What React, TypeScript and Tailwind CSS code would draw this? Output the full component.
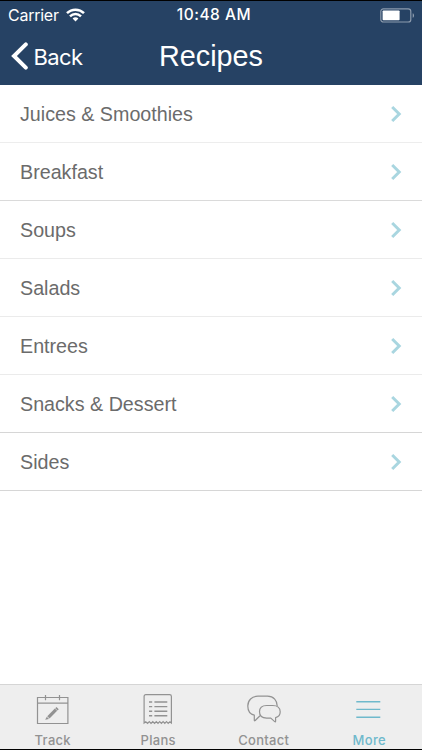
import type { ReactNode } from "react";

type Category = {
    name: string;
    divider: string;
};

const categories: Category[] = [
    { name: "Juices & Smoothies", divider: "border-[#ededed]" },
    { name: "Breakfast", divider: "border-[#dadada]" },
    { name: "Soups", divider: "border-[#ebebeb]" },
    { name: "Salads", divider: "border-[#ebebeb]" },
    { name: "Entrees", divider: "border-[#ebebeb]" },
    { name: "Snacks & Dessert", divider: "border-[#d6d6d6]" },
    { name: "Sides", divider: "border-[#d6d6d6]" },
];

export default function App() {
    return (
        <div className="flex h-[750px] w-[422px] flex-col overflow-hidden border-y border-black bg-white font-['Liberation_Sans',Arial,sans-serif]">
            <header className="h-21 shrink-0 bg-[#264264] text-white">
                <StatusBar />
                <NavBar />
            </header>

            <main className="flex-1">
                <ul>
                    {categories.map((category) => (
                        <CategoryRow key={category.name} category={category} />
                    ))}
                </ul>
            </main>

            <TabBar />
        </div>
    );
}

function StatusBar() {
    return (
        <div className="grid h-7 grid-cols-3 items-center pr-[7px] pl-2 font-[Inter,sans-serif]">
            <div className="flex items-center gap-[7px]">
                <span className="text-[16px] leading-5 tracking-[-0.25px]">Carrier</span>
                <svg width="19" height="14" viewBox="0 0 19 14" fill="none" stroke="currentColor" strokeWidth="2.5">
                    <path d="M1 5.1C5.7.5 13.3.5 18 5.1" />
                    <path d="M4 8.3C7.1 5.3 11.9 5.3 15 8.3" />
                    <path d="M6.6 10.5C8.2 8.9 10.8 8.9 12.4 10.5L9.5 13.4Z" fill="currentColor" stroke="none" />
                </svg>
            </div>

            <span className="pl-[5px] text-center text-[15.5px] leading-5 font-medium tracking-[0.5px] whitespace-nowrap">
                10:48 AM
            </span>

            <svg className="justify-self-end" width="35" height="15" viewBox="0 0 35 15" fill="none">
                <rect x=".8" y=".8" width="30" height="13.2" rx="2.6" stroke="#8c9bad" strokeWidth="1.2" />
                <rect x="2.6" y="2.5" width="17" height="9.8" rx=".8" fill="white" />
                <path d="M32.7 5.2C34.5 5.8 34.5 9.2 32.7 9.8Z" fill="#8c9bad" />
            </svg>
        </div>
    );
}

function NavBar() {
    return (
        <div className="grid h-14 grid-cols-[1fr_auto_1fr] items-center pb-0.5">
            <button type="button" className="flex items-center gap-[5.5px] pl-[11px]">
                <svg width="17" height="28" viewBox="0 0 17 28" fill="none" stroke="white" strokeWidth="4" strokeLinecap="round">
                    <path d="M14.8 2.4 3 14 14.8 25.6" />
                </svg>
                <span className="pt-0.5 font-[Inter,sans-serif] text-[22px] leading-7 tracking-[-0.6px]">Back</span>
            </button>

            <h1 className="text-[28.8px] leading-8">Recipes</h1>
        </div>
    );
}

function CategoryRow({ category }: { category: Category }) {
    return (
        <li className={`flex h-[58px] items-center justify-between border-b pr-5 pl-5 ${category.divider}`}>
            <span className="text-[19.7px] leading-6 text-[#6b6b6b]">{category.name}</span>
            <svg width="12" height="18" viewBox="0 0 12 18" fill="none" stroke="#a9d6e0" strokeWidth="3">
                <path d="M2.2 2 9.2 9 2.2 16" />
            </svg>
        </li>
    );
}

function TabBar() {
    return (
        <nav className="grid h-[65px] shrink-0 grid-cols-4 border-t border-[#d5d5d5] bg-[#eeeeee] text-[#929292]">
            <Tab label="Track">
                <CalendarIcon />
            </Tab>
            <Tab label="Plans">
                <ReceiptIcon />
            </Tab>
            <Tab label="Contact">
                <ChatIcon />
            </Tab>
            <Tab label="More" active>
                <MenuIcon />
            </Tab>
        </nav>
    );
}

type TabProps = {
    label: string;
    active?: boolean;
    children: ReactNode;
};

function Tab({ label, active = false, children }: TabProps) {
    return (
        <button type="button" className={`flex flex-col items-center pt-2 ${active ? "text-[#6fb9cc]" : ""}`}>
            {children}
            <span className="mt-[5px] font-[Inter,sans-serif] text-[13px] leading-4 font-medium tracking-[0.3px]">
                {label}
            </span>
        </button>
    );
}

function CalendarIcon() {
    return (
        <svg width="34" height="34" viewBox="0 0 34 34" fill="none" stroke="currentColor" strokeWidth="1.2">
            <path d="M1.5 4.5H31.9V30.5H1.5ZM1.5 10.2H31.9M9.5 2V7.3M23.5 2V7.3" />
            <path d="M12.4 24.3 20 16.7" strokeWidth="3.2" />
            <path d="M20.4 16.3 21.6 15.1" strokeWidth="3.2" />
            <path d="M10.8 23.7 13 25.9 9.2 26.8Z" fill="currentColor" stroke="none" />
        </svg>
    );
}

function ReceiptIcon() {
    return (
        <svg width="34" height="34" viewBox="0 0 34 34" fill="none" stroke="currentColor" strokeWidth="1.2">
            <path d="M3.1 30V3.5Q3.1 1.7 4.9 1.7H28.6Q30.4 1.7 30.4 3.5V30L28.9 28.7 27.2 30.4 25.5 28.7 23.8 30.4 22.1 28.7 20.4 30.4 18.7 28.7 17 30.4 15.3 28.7 13.5 30.4 11.8 28.7 10 30.4 8.3 28.7 6.6 30.4 4.8 28.7Z" />
            <path d="M8 9H11.2M8 13.6H11.2M8 18.2H11.2M8 22.8H11.2M13.4 9H26.3M13.4 13.6H26.3M13.4 18.2H26.3M13.4 22.8H26.3" strokeWidth="1.4" />
        </svg>
    );
}

function ChatIcon() {
    return (
        <svg width="34" height="34" viewBox="0 0 34 34" fill="none" stroke="currentColor" strokeWidth="1.2" strokeLinejoin="round">
            <path d="M30.2 13C30.2 7.5 26.8 3.2 20.5 3.2H11C4.8 3.2.8 7.3.8 13C.8 18 3.6 21.3 7.3 22.1V27.2Q7.3 28.2 8.2 27.5L13 22.8" />
            <path d="M19.7 12.5H25.8C30.4 12.5 33.2 15.1 33.2 18.8C33.2 21.9 31.4 24 28.6 24.7V28.3Q28.6 29.3 27.7 28.6L23.8 25.1H19.7C15.1 25.1 12.5 22.5 12.5 18.8C12.5 15.1 15.1 12.5 19.7 12.5Z" />
        </svg>
    );
}

function MenuIcon() {
    return (
        <svg width="34" height="34" viewBox="0 0 34 34" fill="none" stroke="currentColor" strokeWidth="1.4">
            <path d="M4.3 8.7H28.3M4.3 16.4H28.3M4.3 24.2H28.3" />
        </svg>
    );
}
